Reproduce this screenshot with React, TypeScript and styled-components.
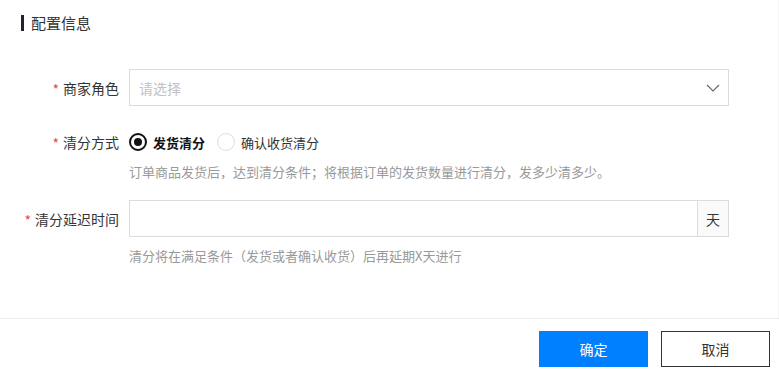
import React, { useState } from "react";
import styled, { createGlobalStyle } from "styled-components";

const GlobalStyle = createGlobalStyle`
  html, body {
    margin: 0;
    padding: 0;
    background: #fff;
  }
  body {
    font-family: "Noto Sans CJK SC", "Noto Sans", "Liberation Sans", sans-serif;
    color: #333;
  }
  * {
    box-sizing: border-box;
  }
`;

const Page = styled.div`
  width: 779px;
  height: 375px;
  display: flex;
  flex-direction: column;
  background: #fff;
`;

const Body = styled.div`
  height: 318px;
  border-right: 1px solid #f6f6f6;
  padding: 15px 0 0 21px;
`;

const Title = styled.div`
  border-left: 3px solid #23232f;
  height: 16px;
  padding-left: 7px;
  font-size: 15px;
  line-height: 16px;
  color: #333;
`;

const Form = styled.div`
  margin-top: 38px;
  display: flex;
  flex-direction: column;
`;

const FormRow = styled.div<{ $top?: number }>`
  display: grid;
  grid-template-columns: 108px 600px;
  margin-top: ${(p) => p.$top ?? 0}px;
`;

const Label = styled.div<{ $height: number }>`
  height: ${(p) => p.$height}px;
  width: 129px;
  margin-left: -21px;
  display: flex;
  align-items: center;
  justify-content: flex-end;
  padding-right: 10px;
  font-size: 14px;
  color: #333;
  white-space: nowrap;
`;

const Star = styled.span`
  color: #f04645;
  margin-right: 4px;
  font-size: 14px;
  position: relative;
  top: 1px;
`;

const Field = styled.div`
  display: flex;
  flex-direction: column;
`;

const Select = styled.div`
  height: 37px;
  border: 1px solid #dcdcdc;
  display: flex;
  align-items: center;
  justify-content: space-between;
  padding: 0 8px 0 9px;
  font-size: 14px;
  color: #c2c2c2;
  background: #fff;
`;

const InputGroup = styled.div`
  height: 37px;
  border: 1px solid #dcdcdc;
  display: flex;
`;

const TextInput = styled.input`
  flex: 1;
  border: none;
  outline: none;
  padding: 0 9px;
  font-size: 14px;
  font-family: inherit;
  background: transparent;
`;

const Addon = styled.div`
  width: 31px;
  border-left: 1px solid #dcdcdc;
  background: #fafafa;
  display: flex;
  align-items: center;
  justify-content: center;
  font-size: 14px;
  color: #333;
`;

const RadioGroup = styled.div`
  height: 22px;
  display: flex;
  align-items: center;
`;

const RadioItem = styled.label`
  display: flex;
  align-items: center;
  margin-right: 12px;
  cursor: pointer;
`;

const RadioCircle = styled.span<{ $checked: boolean }>`
  width: 18px;
  height: 18px;
  border-radius: 50%;
  border: ${(p) => (p.$checked ? "2px solid #111" : "1px solid #dedede")};
  display: flex;
  align-items: center;
  justify-content: center;
  margin-right: 6px;

  &::after {
    content: "";
    width: 8px;
    height: 8px;
    border-radius: 50%;
    background: #111;
    display: ${(p) => (p.$checked ? "block" : "none")};
  }
`;

const RadioText = styled.span<{ $checked: boolean }>`
  font-size: 13px;
  font-weight: ${(p) => (p.$checked ? 700 : 400)};
  color: ${(p) => (p.$checked ? "#111" : "#333")};
`;

const Help = styled.div`
  margin-top: 9px;
  font-size: 13px;
  line-height: 20px;
  color: #999;
  white-space: nowrap;
`;

const Footer = styled.div`
  flex: 1;
  border-top: 1px solid #ececec;
  display: flex;
  justify-content: flex-end;
  align-items: flex-start;
  padding: 12px 9px 0 0;
  gap: 13px;
`;

const Button = styled.button<{ $primary?: boolean }>`
  width: 109px;
  height: 36px;
  font-size: 14px;
  font-family: inherit;
  cursor: pointer;
  border: 1px solid ${(p) => (p.$primary ? "#0080ff" : "#333")};
  background: ${(p) => (p.$primary ? "#0080ff" : "#fff")};
  color: ${(p) => (p.$primary ? "#fff" : "#333")};
`;

const Chevron = () => (
  <svg width="14" height="8" viewBox="0 0 14 8" fill="none">
    <path d="M1 1l6 6 6-6" stroke="#666" strokeWidth="1.1" />
  </svg>
);

const modes = ["发货清分", "确认收货清分"];

const App = () => {
  const [mode, setMode] = useState(0);

  return (
    <Page>
      <GlobalStyle />
      <Body>
        <Title>配置信息</Title>
        <Form>
          <FormRow>
            <Label $height={37}>
              <Star>*</Star>商家角色
            </Label>
            <Field>
              <Select>
                <span>请选择</span>
                <Chevron />
              </Select>
            </Field>
          </FormRow>

          <FormRow $top={25}>
            <Label $height={22}>
              <Star>*</Star>清分方式
            </Label>
            <Field>
              <RadioGroup>
                {modes.map((m, i) => (
                  <RadioItem key={m} onClick={() => setMode(i)}>
                    <RadioCircle $checked={mode === i} />
                    <RadioText $checked={mode === i}>{m}</RadioText>
                  </RadioItem>
                ))}
              </RadioGroup>
              <Help>订单商品发货后，达到清分条件；将根据订单的发货数量进行清分，发多少清多少。</Help>
            </Field>
          </FormRow>

          <FormRow $top={18}>
            <Label $height={37}>
              <Star>*</Star>清分延迟时间
            </Label>
            <Field>
              <InputGroup>
                <TextInput />
                <Addon>天</Addon>
              </InputGroup>
              <Help>清分将在满足条件（发货或者确认收货）后再延期X天进行</Help>
            </Field>
          </FormRow>
        </Form>
      </Body>
      <Footer>
        <Button $primary>确定</Button>
        <Button>取消</Button>
      </Footer>
    </Page>
  );
};

export default App;
